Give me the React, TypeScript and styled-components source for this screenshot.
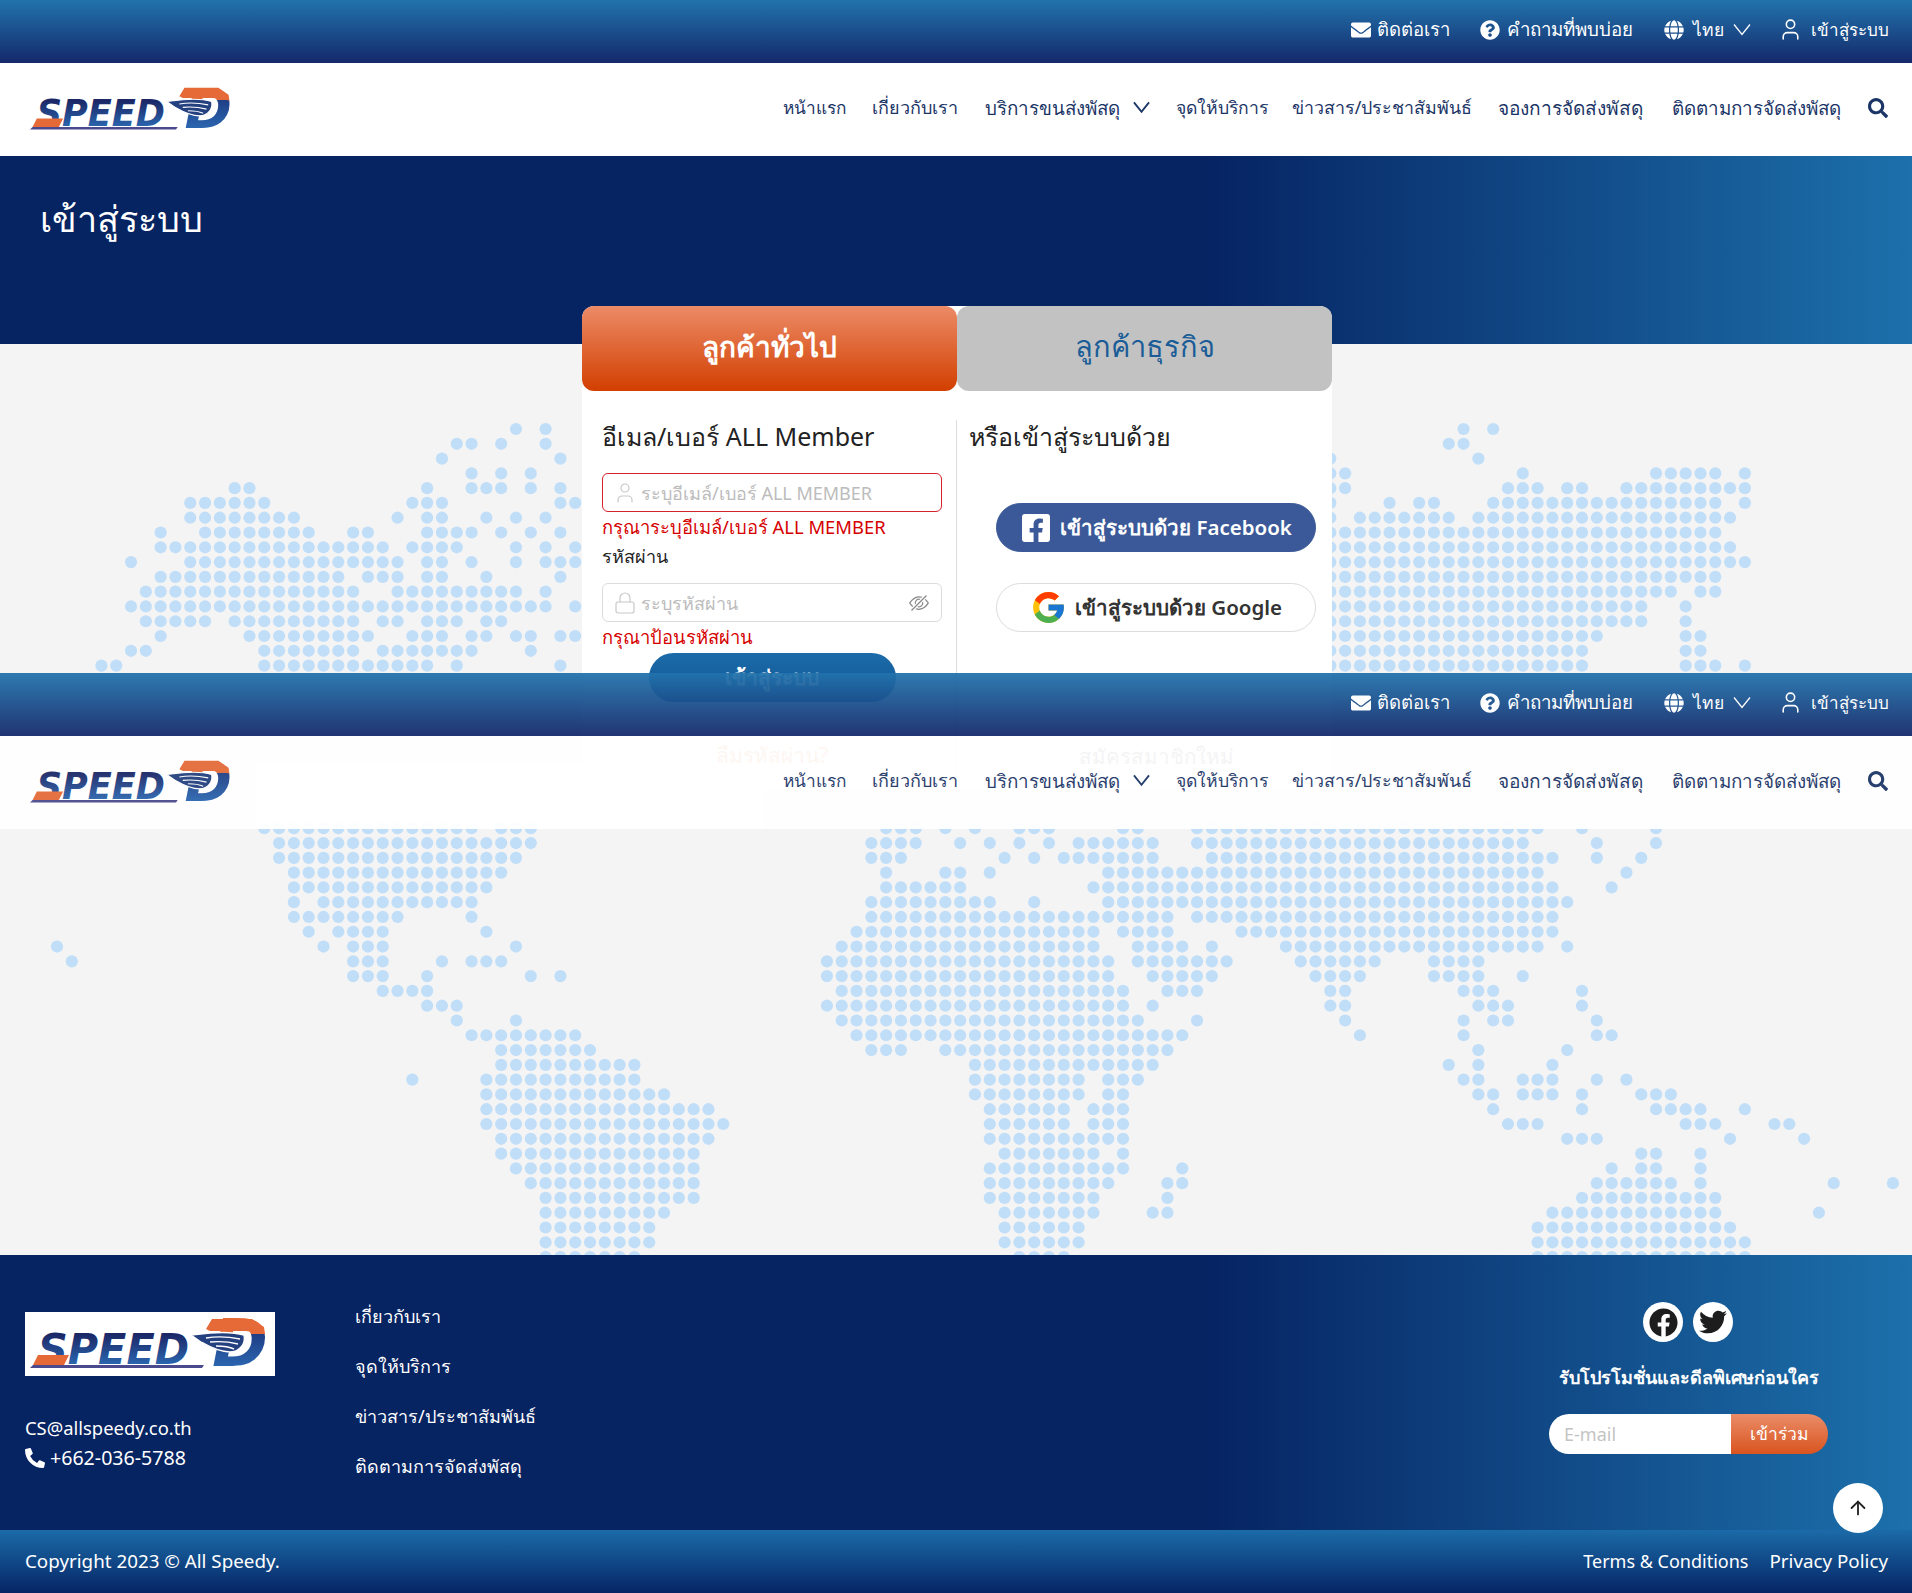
import React from "react";
import styled, { createGlobalStyle } from "styled-components";
import { ArrowUp, Lock, User } from "lucide-react";
import { BsEyeSlash } from "react-icons/bs";
import {
  FaEnvelope,
  FaFacebook,
  FaFacebookSquare,
  FaGlobe,
  FaPhoneAlt,
  FaQuestionCircle,
  FaSearch,
  FaTwitter,
} from "react-icons/fa";
import { FcGoogle } from "react-icons/fc";

const FONT = `"Noto Sans", "Open Sans", sans-serif`;

const GlobalStyle = createGlobalStyle`
  html, body {
    margin: 0;
    padding: 0;
    background: #fff;
    font-family: ${FONT};
  }
  * {
    box-sizing: border-box;
  }
`;

const Page = styled.div`
  position: relative;
  width: 1912px;
  height: 1593px;
  overflow: hidden;
`;

const HeaderRoot = styled.header<{ $floating?: boolean }>`
  width: 100%;
  ${(p) =>
    p.$floating
      ? `position: absolute; top: 673px; left: 0; opacity: 0.94; z-index: 5;`
      : ""}
`;

const TopBar = styled.div`
  height: 63px;
  padding: 0 24px 4px 0;
  display: flex;
  align-items: center;
  justify-content: flex-end;
  color: #fff;
  font-size: 18px;
  background: linear-gradient(180deg, #2273ad 0%, #14296a 100%);
`;

const TopItem = styled.a<{ $gap?: number; $space?: number }>`
  display: flex;
  align-items: center;
  gap: ${(p) => p.$gap ?? 6}px;
  margin-left: ${(p) => p.$space ?? 30}px;
`;

const Label = styled.span<{ $w: number; $size: number }>`
  display: inline-flex;
  justify-content: center;
  width: ${(p) => p.$w}px;
  font-size: ${(p) => p.$size}px;
  white-space: nowrap;
`;

const NavBar = styled.nav`
  height: 93px;
  padding: 0 24px 0 30px;
  display: flex;
  align-items: center;
  justify-content: space-between;
  background: #fff;
`;

const NavLinks = styled.div`
  display: flex;
  align-items: center;
  gap: 25.5px;
  margin-top: -4px;
  color: #1b3566;
`;

const NavLink = styled.a`
  display: flex;
  align-items: center;
  gap: 12px;
`;

const Hero = styled.section`
  height: 188px;
  padding: 34px 40px;
  background: linear-gradient(90deg, #062362 0%, #062362 63%, #1c70ab 100%);
`;

const HeroTitle = styled.h1`
  margin: 0;
  color: #fff;
  font-size: 36px;
  line-height: 58px;
  font-weight: 500;
`;

const Main = styled.main`
  position: relative;
  height: 911px;
  background: #f4f4f4;
`;

const MapSvg = styled.svg`
  position: absolute;
  left: 0;
  top: 0;
`;

const Card = styled.div`
  position: absolute;
  top: -38px;
  left: 582px;
  width: 750px;
  height: 484px;
  background: #fff;
  border-radius: 12px 12px 0 0;
`;

const Tabs = styled.div`
  display: flex;
  height: 85px;
`;

const Tab = styled.button<{ $active?: boolean }>`
  flex: 1;
  border: 0;
  border-radius: 12px;
  padding: 0 0 4px;
  font-family: ${FONT};
  font-size: ${(p) => (p.$active ? 28 : 29)}px;
  font-weight: ${(p) => (p.$active ? 600 : 500)};
  color: ${(p) => (p.$active ? "#fff" : "#1a5c97")};
  background: ${(p) =>
    p.$active
      ? "linear-gradient(180deg, #ec8b67 0%, #d23f00 100%)"
      : "#c2c2c2"};
`;

const Columns = styled.div`
  display: flex;
  padding-top: 29px;
`;

const LeftCol = styled.div`
  width: 376px;
  height: 370px;
  padding: 0 14px 0 20px;
  border-right: 1px solid #dcdcdc;
`;

const RightCol = styled.div`
  flex: 1;
  padding: 0 16px 0 12px;
`;

const ColTitle = styled.h2`
  margin: -2px 0 2px;
  color: #222;
  font-size: 25px;
  line-height: 36px;
  font-weight: 400;
`;

const Field = styled.div<{ $error?: boolean }>`
  display: flex;
  align-items: center;
  height: 39px;
  padding: 0 12px 0 10px;
  gap: 4px;
  border: 1px solid ${(p) => (p.$error ? "#d4232b" : "#dcdcdc")};
  border-radius: 6px;
  color: #c8c8c8;
`;

const FirstField = styled(Field)`
  margin-top: 19px;
`;

const FieldInput = styled.input`
  flex: 1;
  min-width: 0;
  border: 0;
  outline: 0;
  padding: 0;
  background: transparent;
  font-family: ${FONT};
  font-size: 18px;
  &::placeholder {
    color: #bcbcbc;
  }
`;

const EyeIcon = styled(BsEyeSlash)`
  color: #888;
  font-size: 20px;
  transform: scaleX(-1);
`;

const ErrorText = styled.div`
  padding-top: 1px;
  color: #d60000;
  font-size: 18.4px;
  line-height: 28px;
`;

const FieldLabel = styled.div`
  color: #222;
  font-size: 18px;
  line-height: 30px;
  margin-bottom: 12px;
`;

const SubmitButton = styled.button`
  display: block;
  width: 247px;
  height: 49px;
  margin: 2px auto 0;
  border: 0;
  border-radius: 25px;
  color: #fff;
  font-family: ${FONT};
  font-size: 21px;
  font-weight: 600;
  background: linear-gradient(180deg, #1c6ba9 0%, #0f5390 100%);
`;

const BelowLink = styled.a<{ $orange?: boolean }>`
  display: block;
  margin-top: 37px;
  text-align: center;
  color: ${(p) => (p.$orange ? "#e8681f" : "#444")};
  font-size: 21px;
`;

const SocialStack = styled.div`
  display: flex;
  flex-direction: column;
  gap: 31px;
  margin: 49px 0 0 27px;
`;

const SocialButton = styled.button<{ $variant: "facebook" | "google" }>`
  width: 320px;
  height: 49px;
  display: flex;
  align-items: center;
  justify-content: center;
  gap: 8px;
  border-radius: 25px;
  font-family: ${FONT};
  font-size: 20.5px;
  font-weight: 600;
  color: ${(p) => (p.$variant === "facebook" ? "#fff" : "#333")};
  background: ${(p) => (p.$variant === "facebook" ? "#3b5998" : "#fff")};
  border: 1px solid ${(p) => (p.$variant === "facebook" ? "#3b5998" : "#dcdcdc")};
`;

const SignupLink = styled(BelowLink)`
  width: 320px;
  margin: 108px 0 0 27px;
  font-size: 20.5px;
`;

const Footer = styled.footer`
  height: 275px;
  padding: 57px 34px 0 25px;
  display: flex;
  color: #fff;
  background: linear-gradient(90deg, #062362 0%, #062362 63%, #1c70ab 100%);
`;

const FooterBrand = styled.div`
  width: 330px;
`;

const LogoBox = styled.div`
  width: 250px;
  height: 64px;
  padding: 6px 0 0 5px;
  background: #fff;
`;

const Contact = styled.div`
  margin-top: 37px;
  font-size: 18.4px;
  line-height: 30px;
`;

const PhoneRow = styled.div`
  display: flex;
  align-items: center;
  gap: 5px;
  font-size: 19.6px;
`;

const FooterLinks = styled.div`
  display: flex;
  flex-direction: column;
  gap: 20px;
  margin-top: -11px;
  font-size: 18px;
  line-height: 30px;
`;

const Newsletter = styled.div`
  margin-left: auto;
  width: 279px;
  margin-right: 50px;
  margin-top: -10px;
  display: flex;
  flex-direction: column;
  align-items: center;
`;

const SocialRow = styled.div`
  display: flex;
  gap: 10px;
  margin-left: -1px;
`;

const RoundIcon = styled.a`
  width: 40px;
  height: 40px;
  display: flex;
  align-items: center;
  justify-content: center;
  border-radius: 50%;
  background: #fff;
  color: #1d1d1d;
`;

const NewsTitle = styled.div`
  margin-top: 20px;
  font-size: 18px;
  line-height: 30px;
  font-weight: 600;
  white-space: nowrap;
`;

const NewsForm = styled.div`
  margin-top: 22px;
  width: 279px;
  height: 40px;
  display: flex;
  border-radius: 20px;
  overflow: hidden;
`;

const NewsInput = styled.input`
  width: 182px;
  border: 0;
  outline: 0;
  padding: 0 15px;
  font-family: ${FONT};
  font-size: 18px;
  &::placeholder {
    color: #c4c4c4;
  }
`;

const NewsButton = styled.button`
  flex: 1;
  border: 0;
  color: #fff;
  font-family: ${FONT};
  font-size: 17.5px;
  background: linear-gradient(180deg, #ea8c68 0%, #d9541f 100%);
`;

const BottomBar = styled.div`
  height: 63px;
  padding: 0 24px 2px 25px;
  display: flex;
  align-items: center;
  justify-content: space-between;
  color: #fff;
  background: linear-gradient(180deg, #1b6ba8 0%, #062566 100%);
`;

const BottomLinks = styled.div`
  display: flex;
  align-items: center;
  gap: 21px;
`;

const BottomText = styled.span<{ $size?: number }>`
  font-size: ${(p) => p.$size ?? 18.8}px;
`;

const BackToTop = styled.a`
  position: absolute;
  left: 1833px;
  top: 1483px;
  width: 50px;
  height: 50px;
  display: flex;
  align-items: center;
  justify-content: center;
  border-radius: 50%;
  background: #fff;
  color: #222;
  z-index: 3;
`;

// dot rows of the world map, "from-to" columns on a 14.8px grid
const MAP_ROWS: Record<number, string> = {
  0: "31 33 95 97",
  1: "27-28 30 33 94-95",
  2: "26 34 86 96",
  3: "28 30 32 86-87 99 108-112 114",
  4: "12-13 25 28-30 32 34 86-87 98-100 102-103 106-114",
  5: "9-14 24-26 34-35 86 90 92-93 97-112 114",
  6: "9-16 23 25-26 29 31 33 86 88-94 96-113",
  7: "7 10-17 20-21 25-28 30 32 34 86-112",
  8: "7-22 24-27 31 33 35 86-113",
  9: "5 9-23 25-26 28 31 33-35 86-114",
  10: "7-19 21-23 25-26 29 34 86-112",
  11: "6-20 23-31 33 86-109 111-112",
  12: "5-33 35 86-107 110",
  13: "6-10 12-20 22-23 25-27 29-30 86-107 110",
  14: "7 13-21 24-26 28-29 31-32 34-35 86-104 110-111",
  15: "5-6 14-20 22-28 32 86-103 110-111",
  16: "3-4 14-25 27 34 86-103 110-112 114",
  27: "14-28 30-32 56-58 60 62 65-67 72-73 77-100 103 108",
  28: "15-32 55-58 61 63 65 67 69-74 77-99 104 108",
  29: "15-31 55-57 64 66 68-74 78-101 104 107",
  30: "16-30 56 60-61 63 71-100 106",
  31: "16-29 56-61 70-101 105",
  32: "16 18-28 55-63 66 71-102",
  33: "16-23 28 55-75 77-101",
  34: "17 19-22 29 54-70 72-75 80-101",
  35: "0 18 20-22 31 53-70 73-76 78 83-100 102",
  36: "1 20-22 26 28-30 52-71 73-79 84-89 93-96",
  37: "20-22 25 32 34 52-71 74-78 85-88 93-96 99",
  38: "22-25 53-72 75-77 86-87 95-97 103",
  39: "25-27 52-72 74 86-87 96-98 103",
  40: "27 31 53-73 77 87 95 97-98 104",
  41: "28-35 54-76 88 95 104-105",
  42: "30-36 55-57 60-75 96 102",
  43: "30-39 62-74 94 96 101",
  44: "24 29-39 62-69 71-73 95-96 99-101 104 106",
  45: "29-41 62-69 71-72 96-97 99-101 103 107-109",
  46: "29-44 63-68 70-72 97 103 108-111 114",
  47: "29-45 63-68 70-72 98-100 110-112 116-117",
  48: "30-44 63-72 102-104 113 118",
  49: "30-43 64-70 72 107-108 111",
  50: "31-43 63-72 76 105 107-108 111",
  51: "32-43 63-71 75-76 104-109 111 120 124",
  52: "33-43 63-70 75 103-112",
  53: "33-41 64-70 74-75 101-112 119",
  54: "33-40 64-69 100-113",
  55: "33-40 64-69 100-114",
  56: "33-39 65-68 100-114",
};

const expandRow = (row: string) =>
  row.split(" ").flatMap((part) => {
    const [from, to] = part.split("-").map(Number);
    const cols: number[] = [];
    for (let c = from; c <= (to ?? from); c++) cols.push(c);
    return cols;
  });

const WorldMap = () => (
  <MapSvg width="1912" height="911" viewBox="0 344 1912 911">
    {Object.entries(MAP_ROWS).flatMap(([r, row]) =>
      expandRow(row).map((c) => (
        <circle
          key={`${r}-${c}`}
          cx={57 + 14.806 * c}
          cy={429 + 14.787 * Number(r)}
          r="6.1"
          fill="#c1def8"
        />
      ))
    )}
  </MapSvg>
);

const Chevron = ({ width, stroke }: { width: number; stroke: number }) => (
  <svg width={width} height={width * 0.72} viewBox="0 0 18 13" fill="none">
    <polyline
      points="1,1.5 9,11.5 17,1.5"
      stroke="currentColor"
      strokeWidth={stroke}
    />
  </svg>
);

const Logo = ({ width, id }: { width: number; id: string }) => (
  <svg
    width={width}
    viewBox="0 0 238 52"
    style={{ display: "block", overflow: "visible" }}
  >
    <defs>
      <linearGradient id={`${id}-blue`} x1="0" y1="0" x2="0" y2="1">
        <stop offset="0.2" stopColor="#1b2766" />
        <stop offset="0.85" stopColor="#2c6ab4" />
      </linearGradient>
      <linearGradient id={`${id}-d`} x1="0" y1="0" x2="0" y2="1">
        <stop offset="0.38" stopColor="#e56a37" />
        <stop offset="0.38" stopColor="#1f3f86" />
        <stop offset="0.85" stopColor="#2c6ab4" />
      </linearGradient>
    </defs>
    <path d="M0 50 L172 50 L174 47 L3 47 Z" fill="#4c4a8f" />
    <text
      x="8"
      y="46"
      fontFamily="DejaVu Sans, sans-serif"
      fontSize="43"
      fontWeight="700"
      fontStyle="italic"
      textLength="151"
      lengthAdjust="spacingAndGlyphs"
      fill={`url(#${id}-blue)`}
      stroke="#fff"
      strokeWidth="1.2"
      paintOrder="stroke"
    >
      SPEED
    </text>
    <path d="M3 47 L8 37 L39 37 L34 47 Z" fill="#e56a37" />
    <text
      x="182"
      y="48"
      fontFamily="DejaVu Sans, sans-serif"
      fontSize="66"
      fontWeight="700"
      fontStyle="italic"
      textLength="56"
      lengthAdjust="spacingAndGlyphs"
      fill={`url(#${id}-d)`}
    >
      D
    </text>
    <path d="M176 11 L182 1 L222 1 L234 9 L235 16 L216 13 L180 13 Z" fill="#e56a37" />
    <path
      d="M161 17 L180 15 C192 14 204 14 214 17 C216 25 210 34 200 34 C188 34 178 28 171 24 Z"
      fill="#24407f"
      stroke="#fff"
      strokeWidth="1.4"
    />
    <path
      d="M176 20 C188 18 200 19 210 21 M180 24 C190 23 200 24 208 26 M186 28 C192 28 200 29 204 31"
      stroke="#fff"
      strokeWidth="1.4"
      fill="none"
    />
  </svg>
);

const SiteHeader = ({ floating, id }: { floating?: boolean; id: string }) => (
  <HeaderRoot $floating={floating}>
    <TopBar>
      <TopItem>
        <FaEnvelope size={20} />
        <Label $w={73} $size={18.5}>ติดต่อเรา</Label>
      </TopItem>
      <TopItem>
        <FaQuestionCircle size={20} />
        <Label $w={128} $size={18.7}>คำถามที่พบบ่อย</Label>
      </TopItem>
      <TopItem $gap={10}>
        <FaGlobe size={20} />
        <Label $w={29} $size={17.5}>ไทย</Label>
        <Chevron width={18} stroke={1.3} />
      </TopItem>
      <TopItem $space={27} $gap={9}>
        <User size={25} strokeWidth={1.5} />
        <Label $w={76} $size={17}>เข้าสู่ระบบ</Label>
      </TopItem>
    </TopBar>
    <NavBar>
      <Logo width={202} id={id} />
      <NavLinks>
        <NavLink>
          <Label $w={63} $size={17.3}>หน้าแรก</Label>
        </NavLink>
        <NavLink>
          <Label $w={87} $size={18}>เกี่ยวกับเรา</Label>
        </NavLink>
        <NavLink>
          <Label $w={137} $size={18.8}>บริการขนส่งพัสดุ</Label>
          <Chevron width={17} stroke={2} />
        </NavLink>
        <NavLink>
          <Label $w={93} $size={17.6}>จุดให้บริการ</Label>
        </NavLink>
        <NavLink>
          <Label $w={177} $size={17.8}>ข่าวสาร/ประชาสัมพันธ์</Label>
        </NavLink>
        <NavLink>
          <Label $w={148} $size={19.1}>จองการจัดส่งพัสดุ</Label>
        </NavLink>
        <NavLink>
          <Label $w={173} $size={18.8}>ติดตามการจัดส่งพัสดุ</Label>
        </NavLink>
        <FaSearch size={20} />
      </NavLinks>
    </NavBar>
  </HeaderRoot>
);

const App = () => {
  return (
    <Page>
      <GlobalStyle />
      <SiteHeader id="logo-top" />
      <Hero>
        <HeroTitle>เข้าสู่ระบบ</HeroTitle>
      </Hero>
      <Main>
        <WorldMap />
        <Card>
          <Tabs>
            <Tab $active>ลูกค้าทั่วไป</Tab>
            <Tab>ลูกค้าธุรกิจ</Tab>
          </Tabs>
          <Columns>
            <LeftCol>
              <ColTitle>อีเมล/เบอร์ ALL Member</ColTitle>
              <FirstField $error>
                <User size={24} strokeWidth={1.2} />
                <FieldInput placeholder="ระบุอีเมล์/เบอร์ ALL MEMBER" />
              </FirstField>
              <ErrorText>กรุณาระบุอีเมล์/เบอร์ ALL MEMBER</ErrorText>
              <FieldLabel>รหัสผ่าน</FieldLabel>
              <Field>
                <Lock size={24} strokeWidth={1.2} />
                <FieldInput placeholder="ระบุรหัสผ่าน" />
                <EyeIcon />
              </Field>
              <ErrorText>กรุณาป้อนรหัสผ่าน</ErrorText>
              <SubmitButton>เข้าสู่ระบบ</SubmitButton>
              <BelowLink $orange>ลืมรหัสผ่าน?</BelowLink>
            </LeftCol>
            <RightCol>
              <ColTitle>หรือเข้าสู่ระบบด้วย</ColTitle>
              <SocialStack>
                <SocialButton $variant="facebook">
                  <FaFacebookSquare size={32} />
                  เข้าสู่ระบบด้วย Facebook
                </SocialButton>
                <SocialButton $variant="google">
                  <FcGoogle size={37} />
                  เข้าสู่ระบบด้วย Google
                </SocialButton>
              </SocialStack>
              <SignupLink>สมัครสมาชิกใหม่</SignupLink>
            </RightCol>
          </Columns>
        </Card>
      </Main>
      <SiteHeader floating id="logo-float" />
      <Footer>
        <FooterBrand>
          <LogoBox>
            <Logo width={238} id="logo-footer" />
          </LogoBox>
          <Contact>
            CS@allspeedy.co.th
            <PhoneRow>
              <FaPhoneAlt size={20} />
              +662-036-5788
            </PhoneRow>
          </Contact>
        </FooterBrand>
        <FooterLinks>
          <a>เกี่ยวกับเรา</a>
          <a>จุดให้บริการ</a>
          <a>ข่าวสาร/ประชาสัมพันธ์</a>
          <a>ติดตามการจัดส่งพัสดุ</a>
        </FooterLinks>
        <Newsletter>
          <SocialRow>
            <RoundIcon>
              <FaFacebook size={29} />
            </RoundIcon>
            <RoundIcon>
              <FaTwitter size={28} />
            </RoundIcon>
          </SocialRow>
          <NewsTitle>รับโปรโมชั่นและดีลพิเศษก่อนใคร</NewsTitle>
          <NewsForm>
            <NewsInput placeholder="E-mail" />
            <NewsButton>เข้าร่วม</NewsButton>
          </NewsForm>
        </Newsletter>
      </Footer>
      <BottomBar>
        <BottomText>Copyright 2023 © All Speedy.</BottomText>
        <BottomLinks>
          <BottomText $size={18}>Terms &amp; Conditions</BottomText>
          <BottomText>Privacy Policy</BottomText>
        </BottomLinks>
      </BottomBar>
      <BackToTop>
        <ArrowUp size={22} />
      </BackToTop>
    </Page>
  );
};

export default App;
